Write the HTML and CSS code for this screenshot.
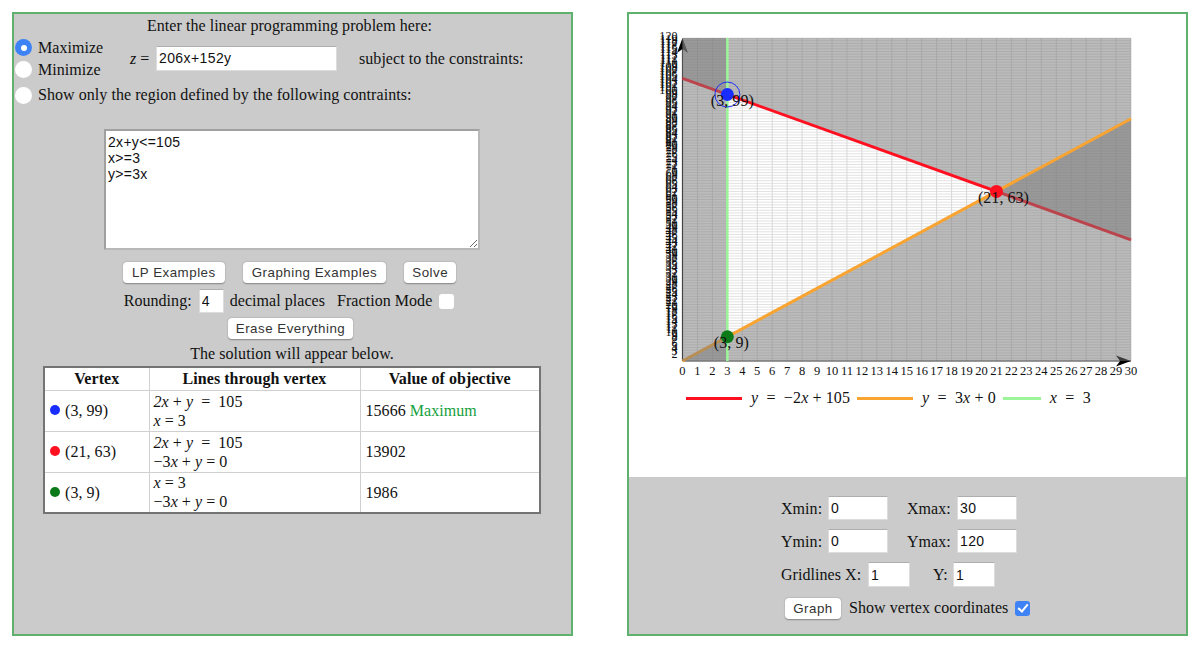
FILE: index.html
```html
<!DOCTYPE html>
<html lang="en">
<head>
<meta charset="utf-8">
<title>Linear Programming Grapher</title>
<link rel="stylesheet" href="styles.css">
</head>
<body>
<main class="page">
  <section class="panel panel-left">
    <p class="title">Enter the linear programming problem here:</p>
    <div class="objective">
      <div class="modes">
        <label class="choice"><input class="radio" type="radio" name="mode" checked>Maximize</label>
        <label class="choice"><input class="radio" type="radio" name="mode">Minimize</label>
      </div>
      <span class="zlabel"><i>z</i> =</span>
      <input class="field field-obj" type="text" value="206x+152y">
      <span class="subject">subject to the constraints:</span>
    </div>
    <label class="choice choice-region"><input class="radio" type="radio" name="mode">Show only the region defined by the following contraints:</label>
    <textarea class="constraints">2x+y&lt;=105
x&gt;=3
y&gt;=3x</textarea>
    <div class="actions">
      <button class="btn" type="button">LP Examples</button>
      <button class="btn" type="button">Graphing Examples</button>
      <button class="btn btn-solve" type="button">Solve</button>
    </div>
    <div class="rounding">
      <span>Rounding:</span>
      <input class="field field-round" type="text" value="4">
      <span>decimal places</span>
      <span class="fraction">Fraction Mode</span>
      <input class="check" type="checkbox">
    </div>
    <button class="btn btn-erase" type="button">Erase Everything</button>
    <p class="notice">The solution will appear below.</p>
    <table class="results">
      <thead>
        <tr><th class="col-a">Vertex</th><th class="col-b">Lines through vertex</th><th class="col-c">Value of objective</th></tr>
      </thead>
      <tbody>
        <tr>
          <td><span class="dot dot-blue"></span>(3, 99)</td>
          <td><i>2x</i> + <i>y</i> &nbsp;=&nbsp; 105<br><i>x</i> = 3</td>
          <td>15666 <span class="max">Maximum</span></td>
        </tr>
        <tr>
          <td><span class="dot dot-red"></span>(21, 63)</td>
          <td><i>2x</i> + <i>y</i> &nbsp;=&nbsp; 105<br>−3<i>x</i> + <i>y</i> = 0</td>
          <td>13902</td>
        </tr>
        <tr>
          <td><span class="dot dot-green"></span>(3, 9)</td>
          <td><i>x</i> = 3<br>−3<i>x</i> + <i>y</i> = 0</td>
          <td>1986</td>
        </tr>
      </tbody>
    </table>
  </section>

  <section class="panel panel-right">
    <div class="plot">
      <svg id="graph" class="graph" width="500" height="360" viewBox="0 0 500 360" xmlns="http://www.w3.org/2000/svg"></svg>
      <div class="legend">
        <span class="swatch swatch-red"></span><span class="eq"><i>y</i> &nbsp;=&nbsp; −2<i>x</i> + 105</span>
        <span class="swatch swatch-orange"></span><span class="eq"><i>y</i> &nbsp;=&nbsp; 3<i>x</i> + 0</span>
        <span class="swatch swatch-green"></span><span class="eq"><i>x</i> &nbsp;=&nbsp; 3</span>
      </div>
    </div>
    <div class="controls">
      <div class="ctl-row">
        <label class="lab lab-min">Xmin:</label><input class="field field-range" type="text" value="0">
        <label class="lab lab-max">Xmax:</label><input class="field field-range" type="text" value="30">
      </div>
      <div class="ctl-row">
        <label class="lab lab-min">Ymin:</label><input class="field field-range" type="text" value="0">
        <label class="lab lab-max">Ymax:</label><input class="field field-range" type="text" value="120">
      </div>
      <div class="ctl-row ctl-grid">
        <label class="lab lab-grid">Gridlines X:</label><input class="field field-grid" type="text" value="1">
        <label class="lab lab-y">Y:</label><input class="field field-grid" type="text" value="1">
      </div>
      <div class="ctl-row ctl-last">
        <button class="btn btn-graph" type="button">Graph</button>
        <span class="show">Show vertex coordinates</span>
        <input class="check" type="checkbox" checked>
      </div>
    </div>
  </section>
</main>
<script src="graph.js"></script>
</body>
</html>
```

FILE: styles.css
```css
* { box-sizing: border-box; }

html, body { margin: 0; background: #fff; }

body {
  font-family: "Liberation Serif", "Times New Roman", serif;
  font-size: 16px;
  letter-spacing: 0.05px;
  color: #111;
}

.page {
  display: flex;
  justify-content: space-between;
  height: 647px;
  padding: 12px 12px 11px;
}

.panel {
  width: 561px;
  border: 2px solid #5eb26d;
  background: #cbcbcb;
}

.panel-left {
  display: flex;
  flex-direction: column;
  align-items: center;
}

.title { margin: 2px 0 0 -6px; height: 20px; line-height: 20px; }

.objective {
  align-self: stretch;
  display: flex;
  align-items: center;
  height: 44px;
  margin-top: 0;
  padding-left: 1px;
}

.modes { width: 115px; margin-top: 1px; display: flex; flex-direction: column; gap: 4px; }

.choice { display: flex; align-items: center; height: 18px; line-height: 18px; }

.radio {
  appearance: none;
  -webkit-appearance: none;
  flex: none;
  width: 17px;
  height: 17px;
  margin: 0 6px 0 0;
  border-radius: 50%;
  background: #fff;
  display: grid;
  place-items: center;
}

.radio:checked { background: #3d83f5; }

.radio:checked::after {
  content: "";
  width: 6px;
  height: 6px;
  border-radius: 50%;
  background: #fff;
}

.zlabel { width: 26px; margin-top: 2px; white-space: nowrap; }

.field {
  font-family: "Liberation Sans", Arial, sans-serif;
  font-size: 14px;
  letter-spacing: 0.4px;
  color: #111;
  background: #fff;
  border: 1px solid #dcdcdc;
  border-top-color: #aeaeae;
  border-radius: 0;
  padding: 1px 2px;
  outline: none;
}

.field-obj { width: 181px; height: 25px; }

.subject { margin-left: 22px; margin-top: 2px; }

.choice-region { align-self: stretch; margin: 6px 0 0 1px; }

.constraints {
  display: block;
  width: 376px;
  height: 121px;
  margin-top: 25px;
  margin-left: -1px;
  padding: 3px 2px;
  font-family: "Liberation Sans", Arial, sans-serif;
  font-size: 14px;
  letter-spacing: 0.3px;
  line-height: 16px;
  color: #111;
  background: #fff;
  border: 2px solid #a0a0a0;
  border-right-color: #b8b8b8;
  border-bottom-color: #b8b8b8;
  outline: none;
}

.actions { display: flex; gap: 18px; margin-top: 12px; margin-left: -6px; }

.btn {
  height: 21px;
  padding: 0 9px;
  font-family: "Liberation Sans", Arial, sans-serif;
  font-size: 13.33px;
  letter-spacing: 0.5px;
  color: #333;
  background: #fff;
  border: 0;
  border-radius: 4px;
  box-shadow: 0 0.5px 1.5px rgba(0, 0, 0, 0.35);
}

.btn-solve { padding: 0 8px; }

.rounding {
  display: flex;
  align-items: center;
  height: 24px;
  margin-top: 6px;
  margin-left: -7px;
  white-space: nowrap;
}

.field-round { width: 25px; height: 24px; margin: 0 6px 0 7px; }

.fraction { margin-left: 12px; margin-right: 7px; }

.check {
  appearance: none;
  -webkit-appearance: none;
  flex: none;
  width: 15px;
  height: 15px;
  margin: 0;
  border-radius: 3px;
  background: #fff;
  display: grid;
  place-items: center;
}

.check:checked { background: #3d83f5; }

.check:checked::after {
  content: "";
  width: 4px;
  height: 8px;
  margin-top: -2px;
  border: solid #fff;
  border-width: 0 2px 2px 0;
  transform: rotate(40deg);
}

.btn-erase { margin-top: 5px; margin-left: -4px; padding: 0 8px; }

.notice { margin: 6px 0 0 -1px; height: 18px; line-height: 18px; }

.results {
  width: 498px;
  margin-top: 3px;
  margin-left: -1px;
  table-layout: fixed;
  border-collapse: collapse;
  background: #fff;
  border: 2px solid #747474;
}

.results th, .results td {
  border: 1px solid #d0d0d0;
  padding: 0 0 0 5px;
  font-weight: normal;
  text-align: left;
  line-height: 19px;
  height: 41px;
  white-space: nowrap;
}

.results td:nth-child(2) { padding-left: 4px; }
.results td:nth-child(3) { padding-left: 5px; }

.results tr { border-top: 1px solid #6a6a6a; }

.results th {
  height: 23px;
  font-weight: bold;
  text-align: center;
  padding: 0;
}

.col-a { width: 105px; }
.col-b { width: 211px; }

.dot {
  display: inline-block;
  width: 10px;
  height: 10px;
  border-radius: 50%;
  margin-right: 5px;
  margin-bottom: 1px;
}

.dot-blue { background: #1a2dff; }
.dot-red { background: #ff1020; }
.dot-green { background: #0d7a19; }

.max { color: #14a03c; }

.panel-right { display: flex; flex-direction: column; }

.plot { background: #fff; height: 463px; padding: 13px 0 0 26px; }

.graph { display: block; font-family: "Liberation Serif", "Times New Roman", serif; }

.legend {
  display: flex;
  align-items: center;
  height: 20px;
  margin-top: 1px;
  margin-left: 31px;
  letter-spacing: 0.12px;
  white-space: nowrap;
}

.swatch { width: 56px; height: 3px; flex: none; }
.swatch-red { background: #ff1020; }
.swatch-orange { background: #f9a431; }
.swatch-green { background: #9df59a; width: 38px; }

.eq { margin: 0 7px 0 9px; }

.controls { flex: 1; padding-top: 19px; padding-left: 152px; background: #cbcbcb; }

.ctl-row { display: flex; align-items: center; height: 24px; margin-bottom: 9px; }

.ctl-grid { height: 25px; }

.lab { white-space: nowrap; }
.lab-min { width: 47px; margin-top: 2px; }
.lab-max { width: 50px; margin-left: 19px; margin-top: 2px; }
.lab-grid { width: 87px; }
.lab-y { width: 20px; margin-left: 23px; }

.field-range { width: 60px; height: 24px; }
.field-grid { width: 42px; height: 25px; }

.ctl-last { padding-left: 4px; }

.btn-graph { width: 56px; padding: 0; }

.show { margin: 0 7px 0 8px; }
```

FILE: graph.js
```js
// Draws the feasible-region graph: x 0..30, y 0..120.
(function () {
  var NS = "http://www.w3.org/2000/svg";
  var svg = document.getElementById("graph");
  var ox = 27.5, oy = 334, ux = 448.5 / 30, uy = 323 / 120;

  function px(x) { return ox + x * ux; }
  function py(y) { return oy - y * uy; }

  function add(tag, attrs, text) {
    var el = document.createElementNS(NS, tag);
    Object.keys(attrs).forEach(function (k) { el.setAttribute(k, attrs[k]); });
    if (text !== undefined) { el.textContent = text; }
    svg.appendChild(el);
    return el;
  }

  function poly(points, fill) {
    add("polygon", {
      points: points.map(function (p) { return px(p[0]) + "," + py(p[1]); }).join(" "),
      fill: fill
    });
  }

  function line(x1, y1, x2, y2, stroke, width) {
    add("line", { x1: px(x1), y1: py(y1), x2: px(x2), y2: py(y2), stroke: stroke, "stroke-width": width });
  }

  var i;
  for (i = 1; i <= 120; i++) { line(0, i, 30, i, "#e2e2e2", 1); }
  for (i = 1; i <= 30; i++) { line(i, 0, i, 120, "#d8d8d8", 1); }

  // Axes and arrow heads sit beneath the shading.
  add("line", { x1: ox, y1: py(0), x2: px(30), y2: py(0), stroke: "#333", "stroke-width": 1.2 });
  add("line", { x1: ox, y1: py(0), x2: ox, y2: 14, stroke: "#333", "stroke-width": 1.2 });
  add("path", { d: "M" + ox + " 11l-5.5 15 5.5-4 5.5 4z", fill: "#000" });
  add("path", { d: "M" + px(30) + " " + oy + "l-15-5.5 4 5.5-4 5.5z", fill: "#000" });

  var shade = "rgba(119,119,119,0.5)";

  // y <= -2x + 105
  poly([[0, 105], [30, 45], [30, 120], [0, 120]], shade);
  line(0, 105, 30, 45, "#ff1020", 3);
  // y >= 3x
  poly([[0, 0], [30, 90], [30, 0]], shade);
  line(0, 0, 30, 90, "#f9a431", 3);
  // x >= 3
  poly([[0, 0], [3, 0], [3, 120], [0, 120]], shade);
  line(3, 0, 3, 120, "#9df59a", 2.5);

  // Axis numbers
  for (i = 0; i <= 30; i++) {
    add("text", { x: px(i), y: oy + 14, "font-size": 12.5, "text-anchor": "middle", fill: "#111" }, String(i));
  }
  for (i = 2; i <= 120; i++) {
    add("text", { x: ox - 5, y: py(i) + 2, "font-size": 12, "text-anchor": "end", fill: "#111" }, String(i));
  }

  // Vertices
  function vertex(x, y, color, label, lx, ly) {
    add("circle", { cx: px(x), cy: py(y), r: 6.5, fill: color });
    add("text", { x: px(x) + lx, y: py(y) + ly, "font-size": 16, "text-anchor": "middle", fill: "#111" }, label);
  }
  add("circle", { cx: px(3), cy: py(99), r: 12.5, fill: "none", stroke: "#1a2dff", "stroke-width": 1 });
  vertex(3, 99, "#1a2dff", "(3, 99)", 5, 11);
  vertex(21, 63, "#ff1020", "(21, 63)", 7, 12);
  vertex(3, 9, "#0d7a19", "(3, 9)", 4, 11);
})();
```
